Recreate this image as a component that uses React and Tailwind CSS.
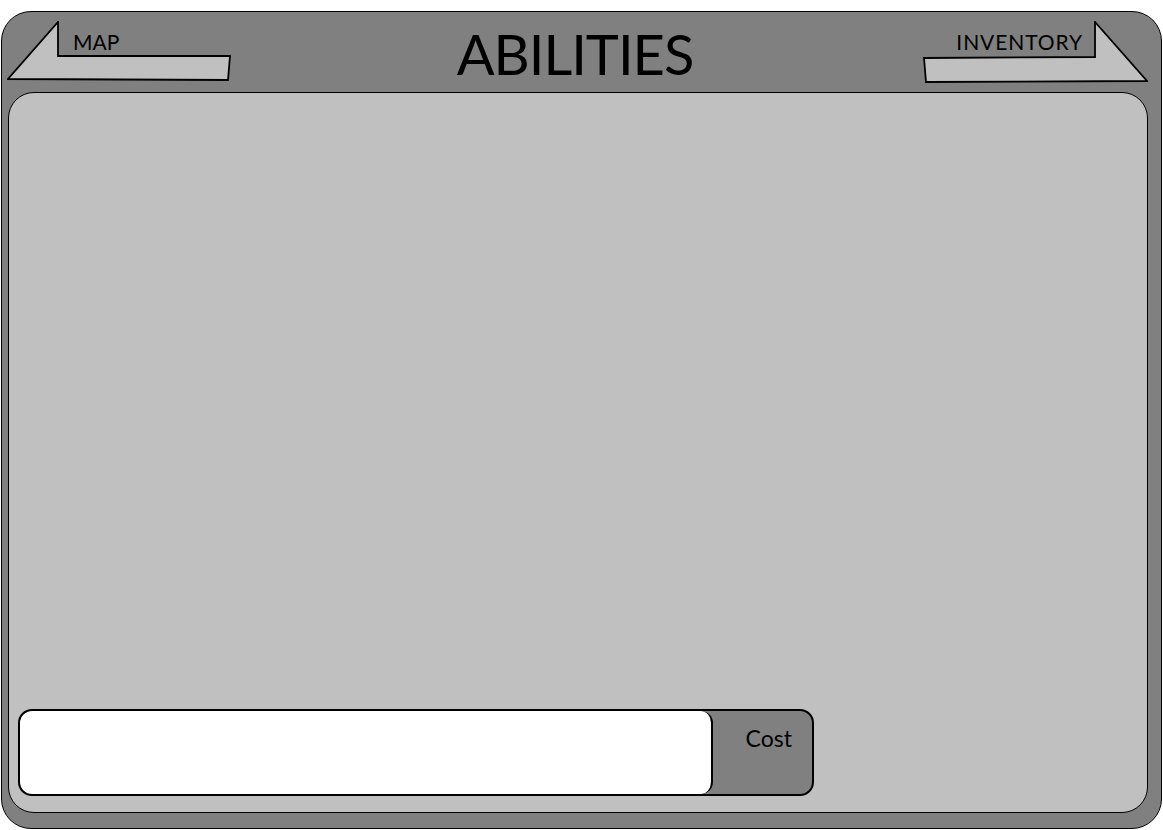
export default function App() {
  const font = { fontFamily: 'Lato, "Open Sans", sans-serif' }
  return (
    <div className="w-[1163px] h-[830px] bg-white pt-[11px] pl-px" style={font}>
      <div className="w-[1161px] h-[818px] bg-[#808080] border border-black rounded-[30px] flex flex-col">

        {/* Header */}
        <div className="h-[80px] flex items-start justify-between pl-[5px] pr-[13px]">
          <div className="relative w-[225px] h-[61px] mt-[9px]">
            <svg className="absolute inset-0" width="225" height="61" viewBox="0 0 225 61">
              <polygon points="51,1 51,35 223,35 221,59 1,58" fill="#c0c0c0" stroke="#000" strokeWidth="1.8" strokeLinejoin="miter" />
            </svg>
            <span className="absolute left-[66px] top-[10px] text-[21px] leading-none text-black">MAP</span>
          </div>

          <h1 className="text-[56px] leading-none text-black mt-[14px] mr-[5px] tracking-[-1px]">ABILITIES</h1>

          <div className="relative w-[225px] h-[62px] mt-[9px]">
            <svg className="absolute inset-0" width="225" height="62" viewBox="0 0 225 62">
              <polygon points="172,1 172,36 1,37 3,61 224,60" fill="#c0c0c0" stroke="#000" strokeWidth="1.8" strokeLinejoin="miter" />
            </svg>
            <span className="absolute right-[65px] top-[10px] text-[21px] leading-none text-black tracking-[0.9px]">INVENTORY</span>
          </div>
        </div>

        {/* Panel */}
        <div className="flex-1 ml-[6px] mr-[13px] mb-[15px] bg-[#c0c0c0] border border-black rounded-[26px] flex flex-col justify-end pl-[9px] pb-[16px]">
          <div className="w-[796px] h-[87px] flex bg-[#808080] border-2 border-black rounded-[14px] overflow-hidden">
            <div className="w-[693px] bg-white border-r-2 border-black rounded-[12px]" />
            <div className="flex-1 flex justify-end pr-[20px] pt-[16px]">
              <span className="text-[23px] leading-none text-black">Cost</span>
            </div>
          </div>
        </div>

      </div>
    </div>
  )
}
